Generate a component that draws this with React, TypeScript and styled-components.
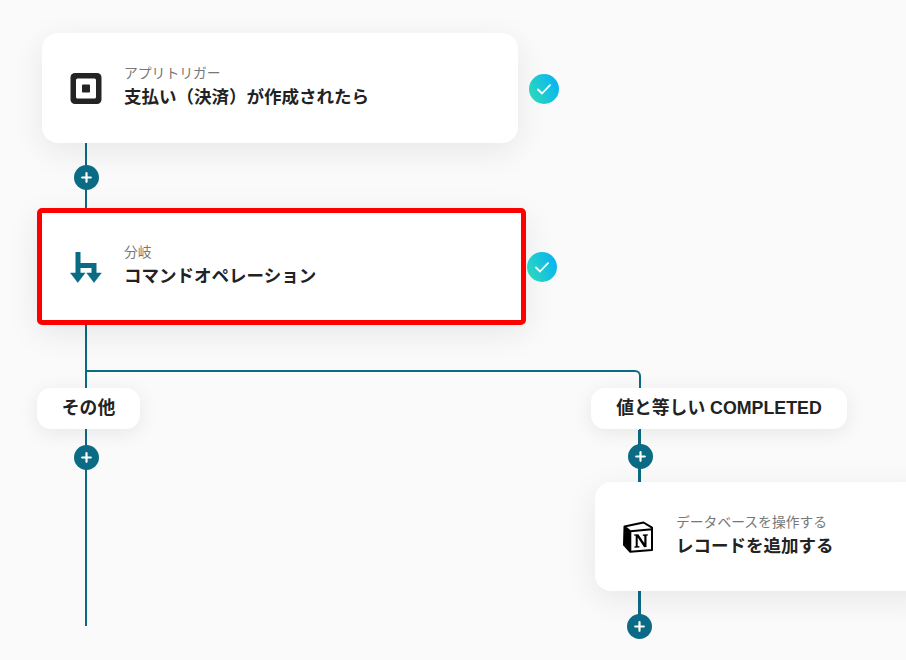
import React from "react"
import styled, { createGlobalStyle } from "styled-components"

const Teal = "#0b6a84"
const Ink = "#222222"

const GlobalStyle = createGlobalStyle`
  html, body {
    margin: 0;
    padding: 0;
    background: #fafafa;
    overflow: hidden;
  }
  body {
    font-family: "Liberation Sans", "Noto Sans CJK JP", sans-serif;
    color: ${Ink};
  }
`

const Canvas = styled.div`
  position: relative;
  width: 906px;
  height: 660px;
  overflow: hidden;
  background: #fafafa;
`

const VLine = styled.div<{ $x: number; $y: number; $h: number; $w?: number }>`
  position: absolute;
  left: ${(p) => p.$x}px;
  top: ${(p) => p.$y}px;
  width: ${(p) => p.$w ?? 2}px;
  height: ${(p) => p.$h}px;
  background: ${Teal};
`

const BranchElbow = styled.div`
  position: absolute;
  left: 87px;
  top: 370px;
  width: 554px;
  height: 20px;
  box-sizing: border-box;
  border-top: 2px solid ${Teal};
  border-right: 2px solid ${Teal};
  border-top-right-radius: 6px;
`

const Card = styled.div<{ $x: number; $y: number; $w: number; $h: number; $selected?: boolean; $inset?: number }>`
  position: absolute;
  left: ${(p) => p.$x}px;
  top: ${(p) => p.$y}px;
  width: ${(p) => p.$w}px;
  height: ${(p) => p.$h}px;
  box-sizing: border-box;
  display: flex;
  align-items: center;
  gap: 22px;
  background: #fff;
  border: ${(p) => (p.$selected ? "5px solid #ff0000" : "none")};
  border-radius: ${(p) => (p.$selected ? "5px" : "16px")};
  padding-left: ${(p) => p.$inset ?? 28}px;
  box-shadow: 0 8px 32px rgba(0, 0, 0, 0.08);
`

const IconSlot = styled.div`
  flex: none;
  width: 32px;
  height: 32px;
  display: flex;
  align-items: center;
  justify-content: center;
`

const CardText = styled.div`
  display: flex;
  flex-direction: column;
  margin-top: -2px;
`

const CardLabel = styled.span`
  font-size: 13.8px;
  line-height: 20px;
  color: #777;
`

const CardTitle = styled.span`
  font-size: 17.5px;
  line-height: 26px;
  font-weight: 700;
  color: ${Ink};
`

const Pill = styled.div<{ $x: number; $w: number }>`
  position: absolute;
  left: ${(p) => p.$x}px;
  top: 388px;
  width: ${(p) => p.$w}px;
  height: 41px;
  padding-bottom: 5px;
  box-sizing: border-box;
  display: flex;
  align-items: center;
  justify-content: center;
  background: #fff;
  border-radius: 14px;
  font-size: 17.8px;
  font-weight: 700;
  white-space: nowrap;
  box-shadow: 0 4px 20px rgba(0, 0, 0, 0.08);
`

const AddButton = styled.button<{ $cx: number; $cy: number }>`
  position: absolute;
  left: ${(p) => p.$cx - 12.5}px;
  top: ${(p) => p.$cy - 12.5}px;
  width: 25px;
  height: 25px;
  padding: 0;
  border: none;
  border-radius: 50%;
  background: ${Teal};
  display: flex;
  align-items: center;
  justify-content: center;
`

const Check = styled.div<{ $cx: number; $cy: number }>`
  position: absolute;
  left: ${(p) => p.$cx - 15}px;
  top: ${(p) => p.$cy - 15}px;
  width: 30px;
  height: 30px;
  border-radius: 50%;
  background: linear-gradient(65deg, #2cd9bc 8%, #08b3f2 92%);
  display: flex;
  align-items: center;
  justify-content: center;
`

function PlusGlyph() {
  return (
    <svg width="11" height="11" viewBox="0 0 11 11">
      <path d="M5.5 1.2v8.6M1.2 5.5h8.6" stroke="#fff" strokeWidth="2.2" strokeLinecap="round" />
    </svg>
  )
}

function CheckGlyph() {
  return (
    <svg width="14" height="11" viewBox="0 0 14 11" fill="none">
      <path d="M1 5.500l4 4L13 1.200" stroke="#fff" strokeWidth="1.800" strokeLinecap="round" strokeLinejoin="round" />
    </svg>
  )
}

function SquareLogo() {
  return (
    <svg width="32" height="31" viewBox="0 0 32 31">
      <rect x="0.5" width="31" height="31" rx="4.5" fill="#262324" />
      <rect x="6" y="5.5" width="20" height="20" rx="1.5" fill="#fff" />
      <rect x="12" y="11.5" width="8" height="8" rx="0.8" fill="#262324" />
    </svg>
  )
}

function BranchIcon() {
  return (
    <svg width="32" height="32" viewBox="0 -1 32 32" fill={Teal}>
      <path d="M5.500 0h5v11h16v11h-5V16h-11v6h-5z" />
      <path d="M0.500 21h14.500L7.800 30.500zM16.800 21h14.500L24 30.500z" stroke={Teal} strokeWidth="0.5" strokeLinejoin="round" />
    </svg>
  )
}

function NotionLogo() {
  return (
    <svg width="32" height="32" viewBox="0 0 32 32">
      <path d="M2 5.500L21.500 1.500 30 6.500V29L8 31 2 24z" fill="#fff" />
      <path
        d="M2.500 5.500L21.500 1.500 30 6.700V29L8.300 30.800 2 23.800zM2.500 5.500L8.300 10.200 30 8.300M8.300 10.200V30.800"
        fill="none"
        stroke="#000"
        strokeWidth="2"
        strokeLinejoin="round"
      />
      <path d="M3 6.500L8 10.500V30L3 24z" fill="#000" />
      <path
        d="M12 13.500l4.300-.3 6 8.700v-6.900l-1.500-.2v-1.200l5-.4v1.200l-1.300.4V26l-2.400.2-6.400-9.600v8.300l1.700.4v1.100l-5 .3v-1.100l1.300-.4V14.800l-1.700-.2z"
        fill="#000"
      />
    </svg>
  )
}

export default function App() {
  return (
    <Canvas>
      <GlobalStyle />

      <VLine $x={85} $y={140} $h={486} />
      <BranchElbow />
      <VLine $x={639} $y={388} $h={42} />
      <VLine $x={638} $y={430} $w={3} $h={54} />
      <VLine $x={638} $y={588} $w={3} $h={38} />

      <Card $x={42} $y={33} $w={476} $h={110}>
        <IconSlot>
          <SquareLogo />
        </IconSlot>
        <CardText>
          <CardLabel>アプリトリガー</CardLabel>
          <CardTitle>支払い（決済）が作成されたら</CardTitle>
        </CardText>
      </Card>
      <Check $cx={544} $cy={89}>
        <CheckGlyph />
      </Check>
      <AddButton $cx={86} $cy={177}>
        <PlusGlyph />
      </AddButton>

      <Card $x={37} $y={208} $w={489} $h={117} $selected>
        <IconSlot>
          <BranchIcon />
        </IconSlot>
        <CardText>
          <CardLabel>分岐</CardLabel>
          <CardTitle>コマンドオペレーション</CardTitle>
        </CardText>
      </Card>
      <Check $cx={542} $cy={267}>
        <CheckGlyph />
      </Check>

      <Pill $x={37} $w={103}>その他</Pill>
      <AddButton $cx={86} $cy={457}>
        <PlusGlyph />
      </AddButton>

      <Pill $x={591} $w={256}>値と等しい COMPLETED</Pill>
      <AddButton $cx={640} $cy={456}>
        <PlusGlyph />
      </AddButton>

      <Card $x={595} $y={482} $w={340} $h={109} $inset={27}>
        <IconSlot>
          <NotionLogo />
        </IconSlot>
        <CardText>
          <CardLabel>データベースを操作する</CardLabel>
          <CardTitle>レコードを追加する</CardTitle>
        </CardText>
      </Card>
      <AddButton $cx={639} $cy={626}>
        <PlusGlyph />
      </AddButton>
    </Canvas>
  )
}
